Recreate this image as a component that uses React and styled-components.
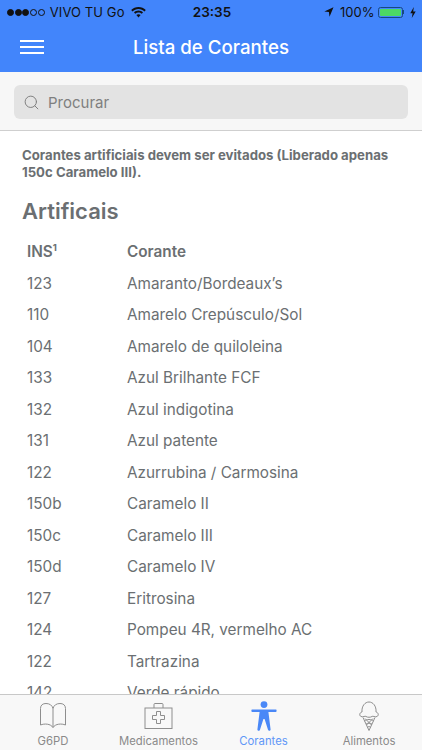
import styled, { createGlobalStyle } from 'styled-components';
import { Search } from 'lucide-react';

const GlobalStyle = createGlobalStyle`
    html, body {
        margin: 0;
        padding: 0;
        background: #ffffff;
    }
    * {
        box-sizing: border-box;
    }
`;

const corantes = [
    ['123', 'Amaranto/Bordeaux’s'],
    ['110', 'Amarelo Crepúsculo/Sol'],
    ['104', 'Amarelo de quiloleina'],
    ['133', 'Azul Brilhante FCF'],
    ['132', 'Azul indigotina'],
    ['131', 'Azul patente'],
    ['122', 'Azurrubina / Carmosina'],
    ['150b', 'Caramelo II'],
    ['150c', 'Caramelo III'],
    ['150d', 'Caramelo IV'],
    ['127', 'Eritrosina'],
    ['124', 'Pompeu 4R, vermelho AC'],
    ['122', 'Tartrazina'],
    ['142', 'Verde rápido'],
];

function BookIcon() {
    return (
        <svg width="28" height="28" viewBox="0 0 28 28" fill="none" stroke="#8e8e8e" strokeWidth="1">
            <path d="M14 7.500C13.200 4.200 10.500 2.500 7 2.500C3.800 2.500 1.500 4 1.500 7.500V24C5.500 22.400 11.500 22.600 14 26.500" />
            <path d="M14 7.500C14.800 4.200 17.500 2.500 21 2.500C24.200 2.500 26.500 4 26.500 7.500V24C22.500 22.400 16.500 22.600 14 26.500Z" />
        </svg>
    );
}

function KitIcon() {
    return (
        <svg width="30" height="28" viewBox="0 0 30 28" fill="none" stroke="#8e8e8e" strokeWidth="1">
            <rect x="1" y="7" width="27" height="20.500" />
            <path d="M10 7V3.500Q10 2.500 11 2.500H18Q19 2.500 19 3.500V7" />
            <path d="M12.500 10.500H16.500V14.500H20.500V18.500H16.500V22.500H12.500V18.500H8.500V14.500H12.500Z" />
        </svg>
    );
}

function PersonIcon() {
    return (
        <svg width="26" height="30" viewBox="0 0 26 30" fill="#4a88f7">
            <circle cx="13" cy="3.600" r="3.400" />
            <path d="M1 8.600H25C25.800 8.600 25.800 11 25 11H17.400L19.600 28.400C19.800 30 17.400 30.400 17 28.800L13.600 18H12.400L9 28.800C8.600 30.400 6.200 30 6.400 28.400L8.600 11H1C0.200 11 0.200 8.600 1 8.600Z" />
        </svg>
    );
}

function IceCreamIcon() {
    return (
        <svg width="22" height="30" viewBox="0 0 22 30" fill="none" stroke="#8e8e8e" strokeWidth="1">
            <path d="M4 11C3.500 5 7 1 11 1C15 1 18.500 5 18 11C20.500 11.500 21 14.500 19 15.500C16.500 16.500 15 14.500 14 15.500C12.500 16.500 9.500 16.500 8 15.500C7 14.500 5.500 16.500 3 15.500C1 14.500 1.500 11.500 4 11Z" />
            <path d="M5 16.500L11 29.500L17 16.500" />
            <path d="M6.500 20C8.500 18 13.500 18 15.500 20M8 23.200C9.500 21.800 12.500 21.800 14 23.200M9.400 26.200C10.400 25.400 11.600 25.400 12.600 26.200" />
            <path d="M7 17.500L13.500 24M15 17.500L8.500 24" />
        </svg>
    );
}

function WifiIcon() {
    return (
        <svg width="15" height="11" viewBox="0 0 15 11" fill="#111">
            <path d="M7.500 0C10.300 0 12.900 1.100 14.800 3L13.500 4.400C11.900 2.900 9.800 2 7.500 2C5.200 2 3.100 2.900 1.500 4.400L0.200 3C2.100 1.100 4.700 0 7.500 0Z" />
            <path d="M7.500 3.600C9.200 3.600 10.800 4.300 12 5.400L10.700 6.800C9.800 6 8.700 5.500 7.500 5.500C6.300 5.500 5.200 6 4.300 6.800L3 5.400C4.200 4.300 5.800 3.600 7.500 3.600Z" />
            <path d="M7.500 7.200C8.300 7.200 9 7.500 9.600 8L7.500 10.500L5.400 8C6 7.500 6.700 7.200 7.500 7.200Z" />
        </svg>
    );
}

function LocationIcon() {
    return (
        <svg width="10" height="10" viewBox="0 0 10 10" fill="#111">
            <path d="M9.500 0.300L0.300 4.500L4.900 5.100L5.500 9.700Z" />
        </svg>
    );
}

function BoltIcon() {
    return (
        <svg width="6" height="11" viewBox="0 0 6 11" fill="#111">
            <path d="M3.800 0L0.300 6.200H2.600L1.800 11L5.700 4.400H3.200Z" />
        </svg>
    );
}

export default function App() {
    return (
        <Page>
            <GlobalStyle />
            <TopArea>
                <StatusBar>
                    <StatusSide>
                        <Signal>
                            <Dot $on /><Dot $on /><Dot $on /><Dot /><Dot />
                        </Signal>
                        <Carrier>VIVO TU Go</Carrier>
                        <WifiIcon />
                    </StatusSide>
                    <Clock>23:35</Clock>
                    <StatusSide $right>
                        <LocationIcon />
                        <Percent>100%</Percent>
                        <Battery><BatteryFill /></Battery>
                        <BatteryTip />
                        <BoltIcon />
                    </StatusSide>
                </StatusBar>
                <NavBar>
                    <Burger><span /><span /><span /></Burger>
                    <NavTitle>Lista de Corantes</NavTitle>
                </NavBar>
            </TopArea>
            <SearchArea>
                <SearchBox>
                    <Search size={17} color="#7f7f7f" strokeWidth={1.4} />
                    <SearchLabel>Procurar</SearchLabel>
                </SearchBox>
            </SearchArea>
            <Content>
                <Notice>Corantes artificiais devem ser evitados (Liberado apenas 150c Caramelo III).</Notice>
                <Heading>Artificais</Heading>
                <Table>
                    <HeadRow>
                        <span>INS<sup>1</sup></span>
                        <span>Corante</span>
                    </HeadRow>
                    {corantes.map(([ins, nome]) =>
                        <Row key={ins + nome}>
                            <span>{ins}</span>
                            <span>{nome}</span>
                        </Row>
                    )}
                </Table>
            </Content>
            <TabBar>
                <Tab><BookIcon /><TabLabel>G6PD</TabLabel></Tab>
                <Tab><KitIcon /><TabLabel>Medicamentos</TabLabel></Tab>
                <Tab><PersonIcon /><TabLabel $active>Corantes</TabLabel></Tab>
                <Tab><IceCreamIcon /><TabLabel>Alimentos</TabLabel></Tab>
            </TabBar>
        </Page>
    );
}

const Page = styled.div`
    width: 100%;
    height: 100vh;
    display: flex;
    flex-direction: column;
    overflow: hidden;
    font-family: Inter, 'Liberation Sans', sans-serif;
`;

const TopArea = styled.div`
    height: 72px;
    flex-shrink: 0;
    background-color: #4285fb;
`;

const StatusBar = styled.div`
    height: 24px;
    padding: 0 6px 0 7px;
    display: flex;
    align-items: center;
    justify-content: space-between;
    color: #111;
    font-size: 13px;
    position: relative;
`;

const StatusSide = styled.div`
    display: flex;
    align-items: center;
    gap: ${props => props.$right ? '3px' : '6px'};
`;

const Signal = styled.div`
    display: flex;
    gap: 0.7px;
    margin-right: -1px;
`;

const Dot = styled.i`
    width: 7px;
    height: 7px;
    border-radius: 50%;
    border: 0.7px solid #111;
    background-color: ${props => props.$on ? '#111' : 'transparent'};
`;

const Carrier = styled.span`
    letter-spacing: 0.1px;
`;

const Clock = styled.span`
    position: absolute;
    left: 2px;
    right: 0;
    text-align: center;
    font-weight: 600;
    font-size: 13.5px;
`;

const Percent = styled.span`
    margin-left: 3px;
`;

const Battery = styled.div`
    width: 25px;
    height: 11px;
    border: 1px solid #174a80;
    border-radius: 2.5px;
    padding: 1px;
`;

const BatteryFill = styled.div`
    width: 100%;
    height: 100%;
    border-radius: 1px;
    background-color: #4cd964;
`;

const BatteryTip = styled.div`
    width: 1.5px;
    height: 4px;
    margin-left: -3px;
    margin-right: 3px;
    background-color: #174a80;
`;

const NavBar = styled.div`
    height: 48px;
    padding-bottom: 2px;
    display: flex;
    align-items: center;
    justify-content: center;
    position: relative;
`;

const Burger = styled.div`
    position: absolute;
    left: 20px;
    top: 16px;
    width: 24px;
    display: flex;
    flex-direction: column;
    gap: 4px;
    span {
        height: 2px;
        background-color: #ffffff;
    }
`;

const NavTitle = styled.h1`
    margin: 0;
    font-size: 18.7px;
    font-weight: 500;
    color: #ffffff;
`;

const SearchArea = styled.div`
    height: 59px;
    flex-shrink: 0;
    padding: 13px 14px 0 14px;
    background-color: #f7f7f7;
    border-bottom: 1px solid #cfcfcf;
`;

const SearchBox = styled.div`
    height: 34px;
    padding-left: 9px;
    display: flex;
    align-items: center;
    gap: 8px;
    border-radius: 6px;
    background-color: #e3e3e3;
`;

const SearchLabel = styled.span`
    font-size: 15px;
    color: #7f7f7f;
`;

const Content = styled.div`
    flex: 1;
    min-height: 0;
    overflow: hidden;
    padding: 16px 22px 0 22px;
    color: #6b6f72;
`;

const Notice = styled.p`
    margin: 0;
    font-size: 13.2px;
    line-height: 17px;
    font-weight: 700;
`;

const Heading = styled.h2`
    margin: 16px 0 0 0;
    font-size: 22px;
    line-height: 28px;
    font-weight: 600;
`;

const Table = styled.div`
    margin-top: 11px;
    padding-left: 5px;
`;

const Row = styled.div`
    height: 31.5px;
    display: grid;
    grid-template-columns: 100px 1fr;
    align-items: center;
    font-size: 15.3px;
`;

const HeadRow = styled(Row)`
    font-weight: 600;
    sup {
        font-size: 9.5px;
        font-weight: 700;
        line-height: 0;
    }
`;

const TabBar = styled.div`
    height: 56px;
    flex-shrink: 0;
    display: grid;
    grid-template-columns: 106px 105px 105px 106px;
    background-color: #f8f8f8;
    border-top: 1px solid #c8c8c8;
`;

const Tab = styled.div`
    padding: 6px 0 2px 0;
    display: flex;
    flex-direction: column;
    align-items: center;
    justify-content: space-between;
`;

const TabLabel = styled.span`
    font-size: 11.3px;
    color: ${props => props.$active ? '#5f97f7' : '#8a8a8a'};
`;
